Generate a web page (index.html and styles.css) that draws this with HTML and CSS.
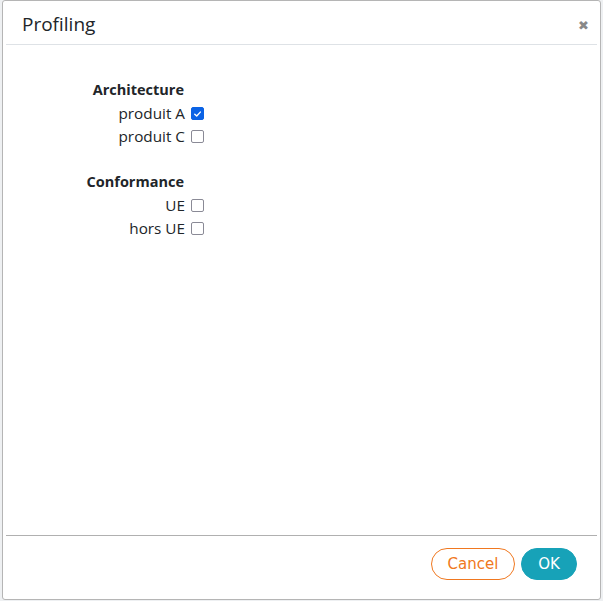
FILE: index.html
```html
<!DOCTYPE html>
<html>
<head>
<meta charset="utf-8">
<link rel="stylesheet" href="styles.css">
</head>
<body>
<div class="page">
  <div class="dialog">
    <div class="header">
      <h1 class="title">Profiling</h1>
      <span class="close">&#10006;</span>
    </div>
    <div class="body">
      <div class="group">
        <div class="group-title">Architecture</div>
        <label class="row">produit A <span class="cb checked"><svg viewBox="0 0 14 14" width="14" height="14"><path d="M3.5 7.2 L6 9.6 L10.6 4.6" fill="none" stroke="#fff" stroke-width="1.8" stroke-linecap="round" stroke-linejoin="round"/></svg></span></label>
        <label class="row">produit C <span class="cb"></span></label>
      </div>
      <div class="group">
        <div class="group-title">Conformance</div>
        <label class="row">UE <span class="cb"></span></label>
        <label class="row">hors UE <span class="cb"></span></label>
      </div>
    </div>
    <div class="footer">
      <button class="btn btn-cancel">Cancel</button>
      <button class="btn btn-ok">OK</button>
    </div>
  </div>
</div>
</body>
</html>
```
FILE: styles.css
```css
html, body {
  margin: 0;
  padding: 0;
  background: #eef0f2;
}
.page {
  width: 603px;
  height: 601px;
  padding: 0 2px 1px 2px;
  box-sizing: border-box;
  background: #eef0f2;
}
.dialog {
  height: 600px;
  box-sizing: border-box;
  border: 1px solid #b5b5b5;
  border-radius: 3px;
  background: #fff;
  padding: 0 3px 0 3px;
  display: flex;
  flex-direction: column;
  font-family: "Open Sans", "Noto Sans", sans-serif;
  color: #212529;
}
.header {
  flex: none;
  border-bottom: 1px solid #dee2e6;
  display: flex;
  align-items: center;
  justify-content: space-between;
  padding: 3px 8px 0 16px;
  box-sizing: border-box;
  height: 44px;
}
.title {
  margin: 0;
  font-family: "Open Sans", sans-serif;
  font-weight: 400;
  font-size: 19px;
  color: #212529;
}
.close {
  color: #888;
  font-size: 13px;
  font-family: "DejaVu Sans", sans-serif;
  font-weight: bold;
  padding-top: 2px;
}
.body {
  flex: 1;
  padding: 33px 0 0 0;
}
.group {
  width: 198px;
  display: flex;
  flex-direction: column;
  align-items: flex-end;
  margin-bottom: 22px;
}
.group-title {
  font-weight: 700;
  font-size: 14.5px;
  line-height: 23px;
  padding-right: 20px;
  padding-bottom: 1px;
}
.row {
  font-size: 15.3px;
  line-height: 23px;
  display: flex;
  align-items: center;
  gap: 6px;
}
.cb {
  width: 11px;
  height: 11px;
  border: 1.5px solid #8a8a96;
  border-radius: 2px;
  display: inline-flex;
  align-items: center;
  justify-content: center;
  background: #fff;
}
.cb.checked {
  background: #0b63e5;
  border-color: #0b63e5;
}
.cb svg {
  width: 12px;
  height: 12px;
}
.footer {
  flex: none;
  height: 64px;
  box-sizing: border-box;
  border-top: 1px solid #b0b0b0;
  display: flex;
  justify-content: flex-end;
  align-items: flex-start;
  padding: 12px 20px 0 0;
  gap: 6px;
}
.btn {
  height: 32px;
  border-radius: 16px;
  font-family: "DejaVu Sans", Verdana, sans-serif;
  font-size: 15px;
  padding: 0;
  cursor: pointer;
}
.btn-cancel {
  width: 84px;
  background: #fff;
  border: 1px solid #f07820;
  color: #f07820;
}
.btn-ok {
  width: 56px;
  background: #17a2b8;
  border: 1px solid #17a2b8;
  color: #fff;
}
```
